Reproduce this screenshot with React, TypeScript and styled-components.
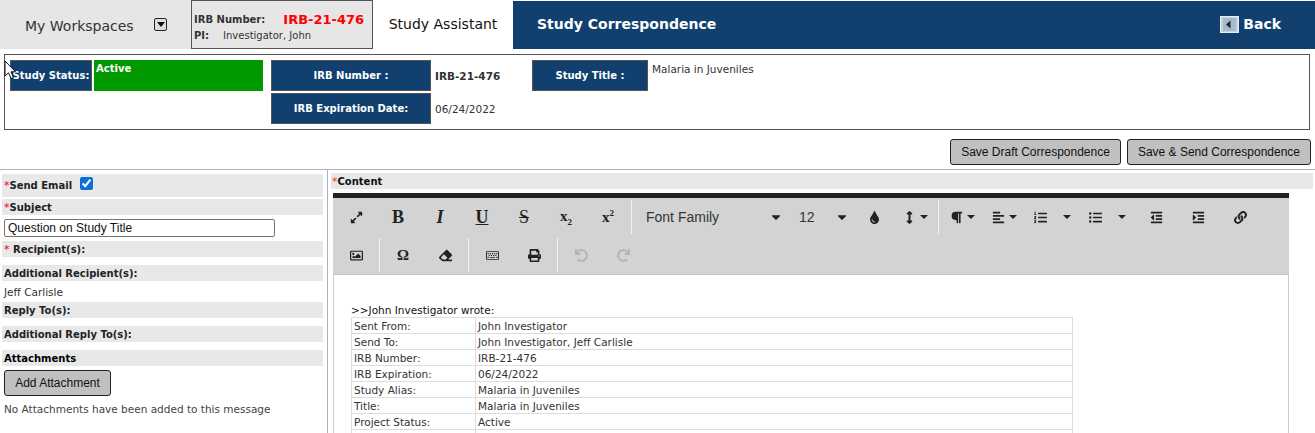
import styled, { createGlobalStyle } from 'styled-components';
import {
  FaExpandAlt,
  FaTint,
  FaArrowsAltV,
  FaParagraph,
  FaAlignLeft,
  FaListOl,
  FaListUl,
  FaOutdent,
  FaIndent,
  FaLink,
  FaRegImage,
  FaEraser,
  FaRegKeyboard,
  FaPrint,
  FaUndo,
  FaRedo,
  FaCaretDown,
} from 'react-icons/fa';

const NAVY = '#11406f';
const SANS = '"DejaVu Sans", Verdana, sans-serif';
const ARIAL = '"Liberation Sans", Arial, sans-serif';

const GlobalStyle = createGlobalStyle`
  html, body { margin: 0; padding: 0; background: #fff; }
  body { font-family: ${SANS}; font-size: 11px; color: #333; }
  * { box-sizing: border-box; }
`;

const history = [
  ['Sent From:', 'John Investigator'],
  ['Send To:', 'John Investigator, Jeff Carlisle'],
  ['IRB Number:', 'IRB-21-476'],
  ['IRB Expiration:', '06/24/2022'],
  ['Study Alias:', 'Malaria in Juveniles'],
  ['Title:', 'Malaria in Juveniles'],
  ['Project Status:', 'Active'],
  ['', ''],
];

export default function App() {
  return (
    <Page>
      <GlobalStyle />
      <Header>
        <Workspaces>
          <span>My Workspaces</span>
          <DropBox />
        </Workspaces>
        <InfoBox>
          <InfoLine>
            <b>IRB Number:</b>
            <IrbRed>IRB-21-476</IrbRed>
          </InfoLine>
          <InfoLine>
            <b>PI:</b>
            <PiName>Investigator, John</PiName>
          </InfoLine>
        </InfoBox>
        <AssistantTab>Study Assistant</AssistantTab>
        <TitleBar>
          <h1>Study Correspondence</h1>
          <BackLink>
            <BackIcon viewBox="0 0 19 17">
              <rect x="0.5" y="0.5" width="18" height="16" fill="#c6d3e2" stroke="#e8eef5" />
              <rect x="3" y="2" width="13" height="13" fill="#a9b9cc" />
              <path d="M10.5 4.5 L6 8.5 L10.5 12.5 Z" fill="#1c2b3a" />
            </BackIcon>
            Back
          </BackLink>
        </TitleBar>
      </Header>

      <Summary>
        <Label $w={82}>Study Status:</Label>
        <StatusValue>Active</StatusValue>
        <IrbColumn>
          <IrbRow>
            <Label $w={160}>IRB Number :</Label>
            <IrbValue $bold>IRB-21-476</IrbValue>
          </IrbRow>
          <IrbRow>
            <Label $w={160}>IRB Expiration Date:</Label>
            <IrbValue>06/24/2022</IrbValue>
          </IrbRow>
        </IrbColumn>
        <Label $w={116}>Study Title :</Label>
        <TitleValue>Malaria in Juveniles</TitleValue>
      </Summary>

      <Actions>
        <GreyButton>Save Draft Correspondence</GreyButton>
        <GreyButton>Save &amp; Send Correspondence</GreyButton>
      </Actions>

      <Columns>
        <LeftColumn>
          <SendRow>
            <Req>*</Req>Send Email
            <Check type="checkbox" defaultChecked />
          </SendRow>
          <FieldBar $after={4}>
            <Req>*</Req>Subject
          </FieldBar>
          <SubjectInput defaultValue="Question on Study Title" />
          <FieldBar $after={8}>
            <Req>*</Req> Recipient(s):
          </FieldBar>
          <FieldBar>Additional Recipient(s):</FieldBar>
          <PlainLine>Jeff Carlisle</PlainLine>
          <FieldBar $after={8}>Reply To(s):</FieldBar>
          <FieldBar $after={8}>Additional Reply To(s):</FieldBar>
          <FieldBar $after={4} $dark>
            Attachments
          </FieldBar>
          <AttachButton>Add Attachment</AttachButton>
          <Muted>No Attachments have been added to this message</Muted>
        </LeftColumn>

        <RightColumn>
          <ContentBar>
            <ContentStar>*</ContentStar>Content
          </ContentBar>
          <Editor>
            <Toolbar>
              <Tool><FaExpandAlt /></Tool>
              <Tool><Glyph>B</Glyph></Tool>
              <Tool><Glyph $italic>I</Glyph></Tool>
              <Tool><Glyph $line="underline">U</Glyph></Tool>
              <Tool><Glyph $line="line-through" $light>S</Glyph></Tool>
              <Tool><Script>x<sub>2</sub></Script></Tool>
              <Tool><Script>x<sup>2</sup></Script></Tool>
              <Sep />
              <Drop $w={153}>
                <DropText>Font Family</DropText>
                <FaCaretDown />
              </Drop>
              <Drop $w={66}>
                <DropText>12</DropText>
                <FaCaretDown />
              </Drop>
              <Tool><FaTint /></Tool>
              <Tool $w={41}>
                <FaArrowsAltV />
                <Caret />
              </Tool>
              <Sep />
              <Tool>
                <FaParagraph />
                <Caret />
              </Tool>
              <Tool>
                <FaAlignLeft />
                <Caret />
              </Tool>
              <Tool $w={55}>
                <FaListOl />
                <Caret $gap={16} />
              </Tool>
              <Tool $w={55}>
                <FaListUl />
                <Caret $gap={16} />
              </Tool>
              <Tool><FaOutdent /></Tool>
              <Tool><FaIndent /></Tool>
              <Tool><FaLink /></Tool>
              <Tool><FaRegImage /></Tool>
              <Sep />
              <Tool><Glyph $small>Ω</Glyph></Tool>
              <Tool><FaEraser /></Tool>
              <Sep />
              <Tool><FaRegKeyboard /></Tool>
              <Tool><FaPrint /></Tool>
              <Sep />
              <Tool $off><FaUndo /></Tool>
              <Tool $off><FaRedo /></Tool>
            </Toolbar>
            <EditorBody>
              <Wrote>&gt;&gt;John Investigator wrote:</Wrote>
              <HistoryTable>
                <tbody>
                  {history.map(([name, value], i) => (
                    <tr key={i}>
                      <td>{name}</td>
                      <td>{value}</td>
                    </tr>
                  ))}
                </tbody>
              </HistoryTable>
            </EditorBody>
          </Editor>
        </RightColumn>
      </Columns>

      <Pointer viewBox="0 0 13 20">
        <path d="M1 1 L1 16 L4.5 12.8 L7 18.5 L9.5 17.4 L7 11.8 L11.5 11.8 Z" fill="#fff" stroke="#111" strokeWidth="1" />
      </Pointer>
    </Page>
  );
}

// Styled Components

const Page = styled.div`
  position: relative;
  width: 1315px;
  height: 433px;
  overflow: hidden;
`;

const Header = styled.header`
  display: flex;
  height: 49px;
`;

const Workspaces = styled.div`
  width: 191px;
  background: #e6e6e6;
  display: flex;
  align-items: center;
  padding: 3px 0 0 25px;
  font-size: 14px;
  color: #333;
`;

const DropBox = styled.span`
  position: relative;
  width: 13px;
  height: 13px;
  margin: -3px 0 0 20px;
  border: 1px solid #222;
  border-radius: 2px;
  background: #ddd;

  &::after {
    content: '';
    position: absolute;
    left: 2px;
    top: 3px;
    border: 4px solid transparent;
    border-top: 5px solid #111;
    border-bottom: 0;
  }
`;

const InfoBox = styled.div`
  width: 182px;
  background: #e6e6e6;
  border: 1px solid #555;
  padding: 10px 0 0 2px;
  font-size: 10px;
  color: #333;
`;

const InfoLine = styled.div`
  display: flex;
  align-items: center;
  height: 16px;
`;

const IrbRed = styled.span`
  margin-left: 18px;
  color: #ff0000;
  font-size: 13px;
  font-weight: bold;
`;

const PiName = styled.span`
  margin-left: 14px;
`;

const AssistantTab = styled.div`
  width: 140px;
  display: flex;
  align-items: center;
  justify-content: center;
  font-size: 14px;
  color: #111;
  padding-bottom: 1px;
`;

const TitleBar = styled.div`
  flex: 1;
  margin-top: 1px;
  background: ${NAVY};
  display: flex;
  align-items: center;
  justify-content: space-between;
  padding: 0 34px 2px 24px;

  h1 {
    margin: 0;
    font-size: 14px;
    font-weight: bold;
    color: #fff;
  }
`;

const BackLink = styled.div`
  display: flex;
  align-items: center;
  gap: 4px;
  font-size: 14px;
  font-weight: bold;
  color: #fff;
`;

const BackIcon = styled.svg`
  width: 19px;
  height: 17px;
`;

const Summary = styled.section`
  display: flex;
  align-items: flex-start;
  height: 76px;
  margin: 5px 5px 0 4px;
  padding: 5px 0 0 5px;
  border: 1px solid #555;
`;

const Label = styled.div<{ $w: number }>`
  flex: none;
  width: ${(p) => p.$w}px;
  height: 31px;
  display: flex;
  align-items: center;
  justify-content: center;
  background: ${NAVY};
  border: 1px solid #555;
  color: #fff;
  font-size: 10px;
  font-weight: bold;
  white-space: nowrap;
`;

const StatusValue = styled.div`
  width: 169px;
  height: 31px;
  margin: 0 8px 0 2px;
  padding: 3px 2px;
  background: #009900;
  color: #fff;
  font-size: 10px;
  font-weight: bold;
`;

const IrbColumn = styled.div`
  width: 261px;
  display: flex;
  flex-direction: column;
  gap: 2px;
`;

const IrbRow = styled.div`
  display: flex;
  align-items: center;
`;

const IrbValue = styled.div<{ $bold?: boolean }>`
  margin-left: 4px;
  font-size: 10.5px;
  font-weight: ${(p) => (p.$bold ? 'bold' : 'normal')};
`;

const TitleValue = styled.div`
  margin-left: 4px;
  padding-top: 3px;
  font-size: 10.5px;
`;

const Actions = styled.div`
  display: flex;
  justify-content: flex-end;
  gap: 6px;
  height: 26px;
  margin: 9px 4px 0 0;
`;

const GreyButton = styled.button`
  height: 26px;
  padding: 0 10px;
  background: #c0c0c0;
  border: 1px solid #222;
  border-radius: 3px;
  color: #111;
  font-family: ${ARIAL};
  font-size: 12px;
`;

const Columns = styled.div`
  display: flex;
  height: 264px;
  margin-top: 4px;
  border-top: 1px solid #a3b4c9;
`;

const LeftColumn = styled.div`
  width: 328px;
  flex: none;
  padding: 4px 4px 0 2px;
  border-right: 1px solid #a3b4c9;
`;

const FieldBar = styled.div<{ $after?: number; $dark?: boolean }>`
  height: 16px;
  margin-bottom: ${(p) => p.$after ?? 0}px;
  padding-left: 2px;
  display: flex;
  align-items: center;
  white-space: pre;
  background: #e8e8e8;
  color: ${(p) => (p.$dark ? '#000' : '#222')};
  font-size: 10px;
  font-weight: bold;
`;

const SendRow = styled(FieldBar)`
  height: 23px;
  margin-bottom: 2px;
`;

const Req = styled.span`
  color: #e8002a;
  font-size: 11px;
  font-weight: normal;
`;

const Check = styled.input`
  width: 13px;
  height: 13px;
  margin: -4px 0 0 8px;
  accent-color: #0b6fd6;
`;

const SubjectInput = styled.input`
  display: block;
  width: 271px;
  height: 18px;
  margin: 0 0 4px 2px;
  padding: 0 3px;
  border: 1px solid #767676;
  border-radius: 2px;
  color: #111;
  font-family: ${ARIAL};
  font-size: 12px;
`;

const PlainLine = styled.div`
  height: 21px;
  display: flex;
  align-items: center;
  padding-left: 2px;
  font-size: 10.5px;
`;

const AttachButton = styled(GreyButton)`
  display: block;
  width: 107px;
  margin-left: 2px;
  padding: 0;
`;

const Muted = styled.div`
  margin: 6px 0 0 2px;
  font-size: 10.5px;
  line-height: 14px;
  color: #444;
`;

const RightColumn = styled.div`
  flex: 1;
  padding: 3px 2px 0 3px;
`;

const ContentBar = styled.div`
  height: 16px;
  display: flex;
  align-items: center;
  padding-left: 1px;
  background: #e8e8e8;
  color: #111;
  font-size: 10px;
  font-weight: bold;
`;

const ContentStar = styled.span`
  color: #ff3300;
  font-size: 11px;
  font-weight: normal;
`;

const Editor = styled.div`
  width: 956px;
  margin: 4px 0 0 2px;
  border-top: 5px solid #222;
`;

const Toolbar = styled.div`
  display: flex;
  flex-wrap: wrap;
  align-items: center;
  height: 77px;
  padding: 0 2px;
  background: #d3d3d3;
  border-bottom: 1px solid #c4c4c4;
`;

const Tool = styled.div<{ $w?: number; $off?: boolean }>`
  width: ${(p) => p.$w ?? 42}px;
  height: 38px;
  display: flex;
  align-items: center;
  justify-content: center;
  color: ${(p) => (p.$off ? '#b3b3b3' : '#222')};
  font-size: 13px;
`;

const Caret = styled.span<{ $gap?: number }>`
  margin-left: ${(p) => p.$gap ?? 4}px;
  border: 4px solid transparent;
  border-top: 4px solid #222;
  border-bottom: 0;
`;

const Glyph = styled.span<{ $italic?: boolean; $line?: string; $light?: boolean; $small?: boolean }>`
  font-family: "Liberation Serif", "Times New Roman", serif;
  font-size: ${(p) => (p.$small ? 15 : 18)}px;
  font-weight: ${(p) => (p.$light ? 'normal' : 'bold')};
  font-style: ${(p) => (p.$italic ? 'italic' : 'normal')};
  text-decoration: ${(p) => p.$line ?? 'none'};
  text-decoration-thickness: 1px;
  line-height: 1;
`;

const Script = styled.span`
  font-family: "Liberation Serif", "Times New Roman", serif;
  font-size: 15px;
  font-weight: bold;

  sub, sup {
    font-size: 9px;
  }
`;

const Sep = styled.i`
  width: 1px;
  height: 34px;
  margin: 0 2px;
  background: #f2f2f2;
`;

const Drop = styled.div<{ $w: number }>`
  width: ${(p) => p.$w}px;
  height: 38px;
  display: flex;
  align-items: center;
  justify-content: space-between;
  padding: 0 6px 0 12px;
  color: #333;
  font-family: ${ARIAL};
  font-size: 14px;

  svg {
    width: 10px;
    color: #222;
  }
`;

const DropText = styled.span`
  color: #333;
`;

const EditorBody = styled.div`
  height: 160px;
  padding: 28px 0 0 17px;
  border-left: 1px solid #ccc;
  border-right: 1px solid #ccc;
  font-size: 10.5px;
  color: #333;
`;

const Wrote = styled.div`
  height: 14px;
  line-height: 14px;
  color: #111;
`;

const HistoryTable = styled.table`
  width: 722px;
  table-layout: fixed;
  border-collapse: collapse;

  td {
    height: 16px;
    padding: 0 2px;
    border: 1px solid #ddd;
    line-height: 14px;
  }

  td:first-child {
    width: 124px;
  }
`;

const Pointer = styled.svg`
  position: absolute;
  left: 4px;
  top: 60px;
  width: 13px;
  height: 20px;
`;
